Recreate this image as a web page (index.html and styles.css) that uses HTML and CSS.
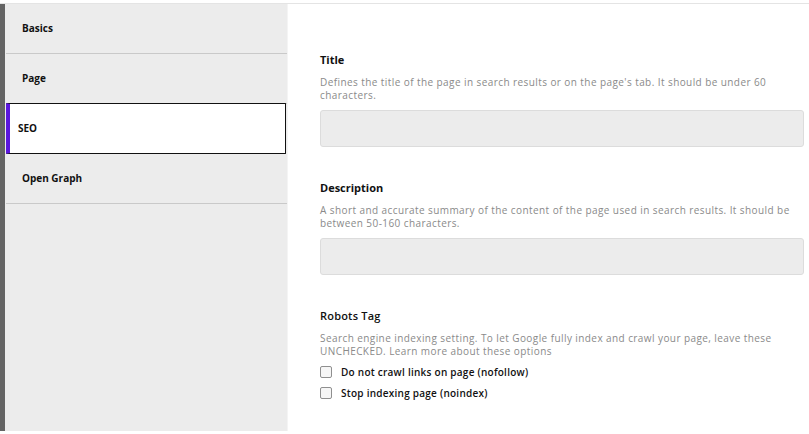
FILE: index.html
```html
<!DOCTYPE html>
<html lang="en">
<head>
<meta charset="utf-8">
<title>SEO settings</title>
<link rel="stylesheet" href="styles.css">
</head>
<body>
<div class="frame">
  <div class="rail"></div>
  <nav class="sidebar">
    <div class="nav-item">Basics</div>
    <div class="nav-item">Page</div>
    <div class="nav-item active">SEO</div>
    <div class="nav-item">Open Graph</div>
  </nav>
  <main class="content">
    <section class="field">
      <h3 class="field-title">Title</h3>
      <p class="field-help">Defines the title of the page in search results or on the page's tab. It should be under 60 characters.</p>
      <div class="input"></div>
    </section>
    <section class="field">
      <h3 class="field-title">Description</h3>
      <p class="field-help">A short and accurate summary of the content of the page used in search results. It should be between 50-160 characters.</p>
      <div class="input"></div>
    </section>
    <section class="field">
      <h3 class="field-title medium">Robots Tag</h3>
      <p class="field-help tight">Search engine indexing setting. To let Google fully index and crawl your page, leave these UNCHECKED. Learn more about these options</p>
      <label class="check"><span class="box"></span>Do not crawl links on page (nofollow)</label>
      <label class="check"><span class="box"></span>Stop indexing page (noindex)</label>
    </section>
  </main>
</div>
</body>
</html>
```
FILE: styles.css
```css
* { box-sizing: border-box; }
html, body { margin: 0; height: 100%; }
body {
  background: #fff;
  font-family: "Open Sans", "DejaVu Sans", sans-serif;
  color: #111;
  padding-top: 3px;
  overflow: hidden;
}
.frame {
  display: flex;
  height: calc(100% - 3px);
  border-top: 1px solid #e4e4e4;
}
.rail {
  width: 5px;
  background: #646464;
  flex: none;
}
.sidebar {
  width: 283px;
  flex: none;
  background: #ececec;
  padding-left: 1px;
  border-right: 1px solid #f4f4f4;
}
.nav-item {
  height: 50px;
  display: flex;
  align-items: center;
  padding-left: 16px;
  padding-bottom: 2px;
  font-size: 10px;
  font-weight: 700;
  border-bottom: 1px solid #c9c9c9;
}
.nav-item.active {
  background: #fff;
  margin-top: -1px;
  height: 51px;
  border: 1.5px solid #111;
  border-left: 4px solid #5b17de;
  border-radius: 1px;
  padding-left: 8px;
  margin-right: 1px;
}
.content {
  flex: 1;
  padding: 48px 5px 0 32px;
}
.field { margin-bottom: 33px; }
.field-title {
  margin: 0;
  font-size: 11px;
  line-height: 16px;
  font-weight: 700;
}
.field-title.medium { font-weight: 600; letter-spacing: 0.2px; }
.field-help {
  margin: 8px 0 8px;
  font-size: 10px;
  line-height: 13px;
  color: #8a8a8a;
  font-weight: 500;
  letter-spacing: 0.42px;
}
.field-help.tight { margin-bottom: 3px; }
.input {
  height: 37px;
  background: #ececec;
  border: 1px solid #dcdcdc;
  border-radius: 3px;
}
.check {
  display: flex;
  align-items: center;
  height: 21px;
  font-size: 10px;
  font-weight: 600;
  letter-spacing: 0.25px;
  color: #111;
}
.box {
  width: 12px;
  height: 12px;
  border: 1px solid #8f8f8f;
  border-radius: 2px;
  background: #f6f6f6;
  margin-right: 9px;
}
```
